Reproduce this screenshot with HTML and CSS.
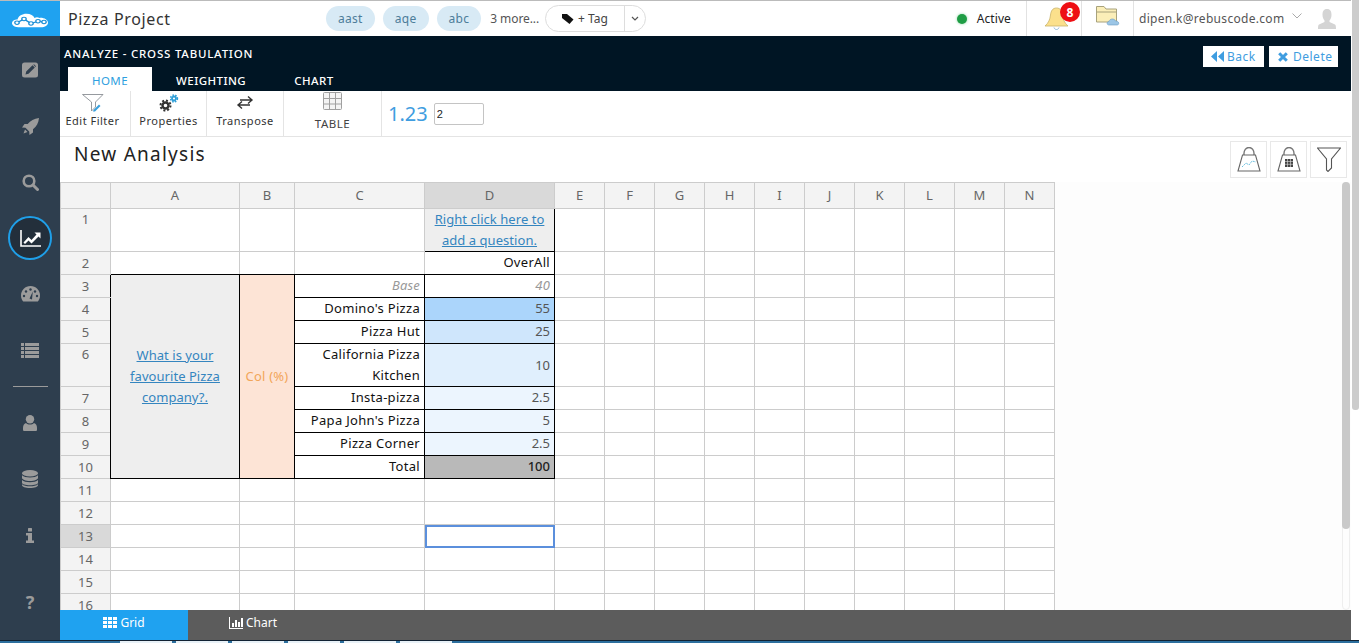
FILE: index.html
```html
<!DOCTYPE html>
<html lang="en">

<head>
    <meta charset="UTF-8">
    <meta name="viewport" content="width=device-width, initial-scale=1.0">
    <title>Pizza Project - Cross Tabulation</title>
    <link rel="stylesheet" href="styles.css">
</head>

<body>
    <div class="app">
        <aside class="sidebar">
            <a class="logo">
                <svg width="38" height="15" viewBox="0 0 38 20" preserveAspectRatio="none">
                    <path d="M9 19C4 19 1 16.500 1 13.500 1 10.500 3.500 8.500 6.500 8.500 7.500 4 11 1 15.500 1 19.500 1 22.500 3.500 23.500 6.500 25 5.500 27 5.500 28.500 6.500 33 6 37 9 37 13 37 16.500 34 19 30 19Z" fill="#fff" />
                    <path d="M6 13L13 8 20 14 27 11 33 12" fill="none" stroke="#1c8fd6" stroke-width="1.600" />
                    <circle cx="6" cy="13" r="2.200" fill="#fff" stroke="#1c8fd6" stroke-width="1.300" />
                    <circle cx="13" cy="8" r="2.200" fill="#fff" stroke="#1c8fd6" stroke-width="1.300" />
                    <circle cx="20" cy="14" r="2.200" fill="#fff" stroke="#1c8fd6" stroke-width="1.300" />
                    <circle cx="27" cy="11" r="2.200" fill="#fff" stroke="#1c8fd6" stroke-width="1.300" />
                    <circle cx="33" cy="12" r="2.200" fill="#fff" stroke="#1c8fd6" stroke-width="1.300" />
                </svg>
            </a>
            <nav class="side-nav">
                <a class="side-item">
                    <svg width="16" height="16" viewBox="0 0 16 16">
                        <rect width="16" height="15" y="0.500" rx="2.500" fill="#9b9b9b" />
                        <path d="M3.500 12.500L4.200 9.500 10.500 3.300 12.800 5.500 6.500 11.800ZM11.300 2.700L12 2.200 14 4.200 13.500 4.900Z" fill="#2e3e4e" />
                    </svg>
                </a>
                <a class="side-item">
                    <svg width="17" height="17" viewBox="0 0 17 17">
                        <path d="M17 0C12 .5 8.500 2.500 5.700 6H2.500L0 9.500 3.500 9.800 7.200 13.500 7.500 17 11 14.500V11.300C14.500 8.500 16.500 5 17 0Z" fill="#9b9b9b" />
                        <path d="M3 11.500L5.500 14 1.500 15.500Z" fill="#9b9b9b" />
                    </svg>
                </a>
                <a class="side-item">
                    <svg width="17" height="17" viewBox="0 0 17 17" fill="none" stroke="#9b9b9b">
                        <circle cx="7" cy="7" r="5.300" stroke-width="2.600" />
                        <path d="M11 11L15.500 15.500" stroke-width="3" stroke-linecap="round" />
                    </svg>
                </a>
                <a class="side-item is-active">
                    <span class="side-ring">
                        <svg width="21" height="17" viewBox="0 0 21 17">
                            <path d="M1 0V16H21" fill="none" stroke="#fff" stroke-width="1.600" />
                            <path d="M3.500 12.500L8.500 7 11.500 10 16.500 4.500 14.500 2.500H20.500V8.500L18.500 6.500 11.500 13.500 8.500 10.500 5 14Z" fill="#fff" />
                        </svg>
                    </span>
                </a>
                <a class="side-item">
                    <svg width="19" height="16" viewBox="0 0 19 16">
                        <path d="M9.500 0C4.200 0 0 4.200 0 9.500 0 11.800.8 13.900 2.200 15.500H16.800C18.200 13.900 19 11.800 19 9.500 19 4.200 14.800 0 9.500 0Z" fill="#9b9b9b" />
                        <g fill="#2e3e4e">
                            <circle cx="9.500" cy="3.500" r="1.200" />
                            <circle cx="5" cy="5.500" r="1.200" />
                            <circle cx="3" cy="10" r="1.200" />
                            <circle cx="16" cy="10" r="1.200" />
                            <circle cx="14" cy="5.500" r="1.200" />
                            <path d="M8.500 12.500L11.800 5.500 11 13.500Z" />
                        </g>
                    </svg>
                </a>
                <a class="side-item">
                    <svg width="18" height="15" viewBox="0 0 18 15" fill="#9b9b9b">
                        <rect width="3" height="3" />
                        <rect x="4" width="14" height="3" />
                        <rect y="4" width="3" height="3" />
                        <rect x="4" y="4" width="14" height="3" />
                        <rect y="8" width="3" height="3" />
                        <rect x="4" y="8" width="14" height="3" />
                        <rect y="12" width="3" height="3" />
                        <rect x="4" y="12" width="14" height="3" />
                    </svg>
                </a>
                <hr class="side-rule">
                <a class="side-item">
                    <svg width="14" height="16" viewBox="0 0 14 16" fill="#9b9b9b">
                        <circle cx="7" cy="4.300" r="4.200" />
                        <path d="M3 8C1 8.500 0 10.500 0 13V14.500C0 15.500.5 16 1.500 16H12.500C13.500 16 14 15.500 14 14.500V13C14 10.500 13 8.500 11 8 10 9 8.500 9.500 7 9.500 5.500 9.500 4 9 3 8Z" />
                    </svg>
                </a>
                <a class="side-item">
                    <svg width="16" height="18" viewBox="0 0 16 18" fill="#9b9b9b">
                        <ellipse cx="8" cy="3.200" rx="8" ry="3.200" />
                        <path d="M0 5.300C1.500 6.900 4.500 7.500 8 7.500S14.500 6.900 16 5.300V8C16 9.500 12.500 11 8 11S0 9.500 0 8Z" />
                        <path d="M0 10C1.500 11.500 4.500 12.200 8 12.200S14.500 11.500 16 10V12.700C16 14.200 12.500 15.200 8 15.200S0 14.200 0 12.700Z" />
                        <path d="M0 14.300C1.500 15.700 4.500 16.300 8 16.300S14.500 15.700 16 14.300V15C16 16.800 12.500 18 8 18S0 16.800 0 15Z" />
                    </svg>
                </a>
                <a class="side-item">
                    <svg width="8" height="15" viewBox="0 0 8 15" fill="#9b9b9b">
                        <rect x="2" width="4" height="3.500" rx=".5" />
                        <path d="M0 5H6V12.500H8V15H0V12.500H2V7.500H0Z" />
                    </svg>
                </a>
                <a class="side-item side-help">?</a>
            </nav>
        </aside>

        <div class="main">
            <header class="topbar">
                <span class="project-name">Pizza Project</span>
                <div class="tags">
                    <span class="tag">aast</span>
                    <span class="tag">aqe</span>
                    <span class="tag">abc</span>
                    <span class="more">3 more...</span>
                    <div class="tag-btn">
                        <span class="tag-add">
                            <svg width="12" height="10" viewBox="0 0 12 10">
                                <path d="M0 0H5L11.500 5.500 7.500 10 0 4Z" fill="#111" />
                            </svg>
                            + Tag
                        </span>
                        <span class="tag-caret">
                            <svg width="8" height="5" viewBox="0 0 8 5">
                                <path d="M1 1L4 4 7 1" fill="none" stroke="#555" stroke-width="1.200" />
                            </svg>
                        </span>
                    </div>
                </div>
                <div class="top-right">
                    <div class="status"><span class="dot"></span>Active</div>
                    <div class="bell">
                        <svg width="25" height="23" viewBox="0 0 25 23">
                            <path d="M12.500 1C8.500 1 7 4 6.500 8 6 12.500 4.500 16 1 19H24C20.500 16 19 12.500 18.500 8 18 4 16.500 1 12.500 1Z" fill="#fbe08c" stroke="#c9b36a" stroke-width=".8" />
                            <path d="M10 20.500C10.500 22 11.500 22.500 12.500 22.500S14.500 22 15 20.500" fill="none" stroke="#8fb6d8" stroke-width="1" />
                        </svg>
                        <span class="badge">8</span>
                    </div>
                    <div class="folder">
                        <svg width="24" height="21" viewBox="0 0 24 21">
                            <path d="M.5 1.500H8L10 4H20.500V17H.5Z" fill="#fbeeb8" stroke="#a8a27c" />
                            <path d="M.5 7H20.500" stroke="#a8a27c" />
                            <path d="M13 20C10.500 20 10.500 16.500 13 16.500 13.500 13.500 18.500 13 19.500 16 23 15.500 24 20 21 20Z" fill="#9cc6e6" stroke="#6c9cc2" stroke-width=".6" />
                        </svg>
                    </div>
                    <div class="account">
                        <span>dipen.k@rebuscode.com</span>
                        <svg class="account-caret" width="10" height="6" viewBox="0 0 10 6">
                            <path d="M.5 .5L5 5 9.500 .5" fill="none" stroke="#aaa" />
                        </svg>
                        <svg class="avatar" width="18" height="20" viewBox="0 0 18 20">
                            <path d="M9 0C5.500 0 4.500 2.500 4.500 6 4.500 8.500 5.500 10.500 6.500 11.500V13L1 15.500C.3 16 0 17 0 20H18C18 17 17.700 16 17 15.500L11.500 13V11.500C12.500 10.500 13.500 8.500 13.500 6 13.500 2.500 12.500 0 9 0Z" fill="#d4d4d4" />
                        </svg>
                    </div>
                </div>
            </header>

            <section class="analyze-bar">
                <div class="analyze-left">
                    <h2 class="analyze-title">ANALYZE - CROSS TABULATION</h2>
                    <div class="tabs">
                        <a class="tab active">HOME</a>
                        <a class="tab">WEIGHTING</a>
                        <a class="tab">CHART</a>
                    </div>
                </div>
                <div class="analyze-actions">
                    <button class="action-btn w-back">
                        <svg width="13" height="11" viewBox="0 0 13 11" fill="#3f9de0">
                            <path d="M6 0V11L0 5.500ZM13 0V11L7 5.500Z" />
                        </svg>
                        Back
                    </button>
                    <button class="action-btn w-delete">
                        <svg width="10" height="10" viewBox="0 0 10 10" fill="none" stroke="#3f9de0" stroke-width="3">
                            <path d="M1.200 1.200L8.800 8.800M8.800 1.200L1.200 8.800" />
                        </svg>
                        Delete
                    </button>
                </div>
            </section>

            <section class="ribbon">
                <div class="ribbon-item w-filter">
                    <svg width="22" height="18" viewBox="0 0 22 18" fill="none">
                        <path d="M.5 .5H21L13.500 8V13L9.500 17V8Z" stroke="#8a8f94" stroke-width=".9" />
                        <path d="M11.500 16L17 10.500 18.500 12 13 17.500 11 17.500Z" fill="#3aa0dc" />
                    </svg>
                    <span>Edit Filter</span>
                </div>
                <div class="ribbon-item w-props">
                    <svg width="20" height="18" viewBox="0 0 20 18" fill="none">
                        <circle cx="6.500" cy="11.500" r="3" stroke="#333" stroke-width="2.400" />
                        <circle cx="6.500" cy="11.500" r="5" stroke="#333" stroke-width="2" stroke-dasharray="2 1.900" />
                        <circle cx="15" cy="4.500" r="2" stroke="#2f9fd8" stroke-width="1.800" />
                        <circle cx="15" cy="4.500" r="3.400" stroke="#2f9fd8" stroke-width="1.600" stroke-dasharray="1.500 1.300" />
                    </svg>
                    <span>Properties</span>
                </div>
                <div class="ribbon-item w-trans">
                    <svg width="18" height="18" viewBox="0 0 18 18" fill="none" stroke="#333" stroke-width="1.400">
                        <path d="M4 6H15.500M12 2.500L16 6 12 9.500" />
                        <path d="M14 11H2.500M6 7.500L2 11 6 14.500" />
                    </svg>
                    <span>Transpose</span>
                </div>
                <div class="ribbon-item w-table">
                    <svg width="19" height="18" viewBox="0 0 19 18" fill="#f4f4f4" stroke="#a0a0a0">
                        <rect x=".5" y=".5" width="18" height="17" rx="1" />
                        <path d="M6.500 .5V17.500M12.500 .5V17.500M.5 6.500H18.500M.5 12H18.500" fill="none" />
                    </svg>
                    <span class="table-label">TABLE</span>
                </div>
                <div class="decimals">
                    <span class="decimals-label">1.23</span>
                    <input class="decimals-input" type="text" value="2">
                </div>
            </section>

            <div class="title-row">
                <h1 class="page-title">New Analysis</h1>
                <div class="title-tools">
                    <span class="tool-box">
                        <svg width="24" height="25" viewBox="0 0 24 25" fill="none">
                            <path d="M7 8C6 -2 18 -2 17 8" stroke="#777" stroke-width="1.400" />
                            <path d="M5.500 8H18.500L23 24H1Z" stroke="#666" stroke-width="1.100" />
                            <path d="M5 20L9 16 12 18 15 14 19 15" stroke="#6cc0df" stroke-width="1" stroke-dasharray="2 1" />
                        </svg>
                    </span>
                    <span class="tool-box">
                        <svg width="24" height="25" viewBox="0 0 24 25" fill="none">
                            <path d="M7 8C6 -2 18 -2 17 8" stroke="#777" stroke-width="1.400" />
                            <path d="M5.500 8H18.500L23 24H1Z" stroke="#666" stroke-width="1.100" />
                            <rect x="8" y="12" width="8" height="8" fill="#444" />
                            <path d="M10.500 12V20M13.500 12V20M8 14.500H16M8 17.300H16" stroke="#ddd" stroke-width=".6" />
                        </svg>
                    </span>
                    <span class="tool-box">
                        <svg width="24" height="25" viewBox="0 0 24 25" fill="none">
                            <path d="M.5 1H23.500L14.500 12V21L11 24.500 9.500 23V12Z" stroke="#555" stroke-width="1.100" />
                        </svg>
                    </span>
                </div>
            </div>

            <div class="grid-area">
                <div class="grid-scroll">
                    <table class="sheet">
                        <colgroup>
                            <col class="c-head">
                            <col class="c-a">
                            <col class="c-b">
                            <col class="c-c">
                            <col class="c-d">
                            <col span="10" class="c-x">
                        </colgroup>
                        <tr class="r-head">
                            <th></th><th>A</th><th>B</th><th>C</th><th class="sel">D</th><th>E</th><th>F</th><th>G</th><th>H</th><th>I</th><th>J</th><th>K</th><th>L</th><th>M</th><th>N</th>
                        </tr>
                        <tr class="r-tall">
                            <th class="top">1</th><td></td><td></td><td></td>
                            <td class="q-cell blk"><a class="link">Right click here to add a question.</a></td>
                            <td></td><td></td><td></td><td></td><td></td><td></td><td></td><td></td><td></td><td></td>
                        </tr>
                        <tr>
                            <th>2</th><td class="blk-b"></td><td class="blk-b"></td><td class="blk-b"></td>
                            <td class="label blk">OverAll</td>
                            <td></td><td></td><td></td><td></td><td></td><td></td><td></td><td></td><td></td><td></td>
                        </tr>
                        <tr>
                            <th class="blk-r">3</th>
                            <td rowspan="8" class="q-side blk"><a class="link">What is your favourite Pizza company?.</a></td>
                            <td rowspan="8" class="col-pct blk">Col (%)</td>
                            <td class="base blk">Base</td><td class="base blk">40</td>
                            <td></td><td></td><td></td><td></td><td></td><td></td><td></td><td></td><td></td><td></td>
                        </tr>
                        <tr>
                            <th class="blk-r">4</th><td class="label blk">Domino's Pizza</td><td class="val blk heat1">55</td>
                            <td></td><td></td><td></td><td></td><td></td><td></td><td></td><td></td><td></td><td></td>
                        </tr>
                        <tr>
                            <th class="blk-r">5</th><td class="label blk">Pizza Hut</td><td class="val blk heat2">25</td>
                            <td></td><td></td><td></td><td></td><td></td><td></td><td></td><td></td><td></td><td></td>
                        </tr>
                        <tr class="r-tall">
                            <th class="top blk-r">6</th><td class="label blk">California Pizza Kitchen</td><td class="val blk heat3">10</td>
                            <td></td><td></td><td></td><td></td><td></td><td></td><td></td><td></td><td></td><td></td>
                        </tr>
                        <tr>
                            <th class="blk-r">7</th><td class="label blk">Insta-pizza</td><td class="val blk heat4">2.5</td>
                            <td></td><td></td><td></td><td></td><td></td><td></td><td></td><td></td><td></td><td></td>
                        </tr>
                        <tr>
                            <th class="blk-r">8</th><td class="label blk">Papa John's Pizza</td><td class="val blk heat4">5</td>
                            <td></td><td></td><td></td><td></td><td></td><td></td><td></td><td></td><td></td><td></td>
                        </tr>
                        <tr>
                            <th class="blk-r">9</th><td class="label blk">Pizza Corner</td><td class="val blk heat4">2.5</td>
                            <td></td><td></td><td></td><td></td><td></td><td></td><td></td><td></td><td></td><td></td>
                        </tr>
                        <tr>
                            <th class="blk-r">10</th><td class="label blk">Total</td><td class="val blk total">100</td>
                            <td></td><td></td><td></td><td></td><td></td><td></td><td></td><td></td><td></td><td></td>
                        </tr>
                        <tr>
                            <th>11</th><td></td><td></td><td></td><td></td><td></td><td></td><td></td><td></td><td></td><td></td><td></td><td></td><td></td><td></td>
                        </tr>
                        <tr>
                            <th>12</th><td></td><td></td><td></td><td></td><td></td><td></td><td></td><td></td><td></td><td></td><td></td><td></td><td></td><td></td>
                        </tr>
                        <tr>
                            <th class="sel">13</th><td></td><td></td><td></td><td class="current"></td><td></td><td></td><td></td><td></td><td></td><td></td><td></td><td></td><td></td><td></td>
                        </tr>
                        <tr>
                            <th>14</th><td></td><td></td><td></td><td></td><td></td><td></td><td></td><td></td><td></td><td></td><td></td><td></td><td></td><td></td>
                        </tr>
                        <tr>
                            <th>15</th><td></td><td></td><td></td><td></td><td></td><td></td><td></td><td></td><td></td><td></td><td></td><td></td><td></td><td></td>
                        </tr>
                        <tr>
                            <th>16</th><td></td><td></td><td></td><td></td><td></td><td></td><td></td><td></td><td></td><td></td><td></td><td></td><td></td><td></td>
                        </tr>
                    </table>
                </div>
                <div class="inner-scroll"><div class="inner-thumb"></div></div>
            </div>

            <footer class="sheet-tabs">
                <a class="sheet-tab active">
                    <svg width="14" height="11" viewBox="0 0 14 11" fill="#fff">
                        <path d="M0 0H4V3H0ZM5 0H9V3H5ZM10 0H14V3H10ZM0 4H4V7H0ZM5 4H9V7H5ZM10 4H14V7H10ZM0 8H4V11H0ZM5 8H9V11H5ZM10 8H14V11H10Z" />
                    </svg>
                    Grid
                </a>
                <a class="sheet-tab">
                    <svg width="14" height="12" viewBox="0 0 14 12" fill="#fff">
                        <path d="M0 0H1V11H14V12H0ZM3 6H5V10H3ZM6 3H8V10H6ZM9 5H11V10H9ZM12 1H14V10H12Z" />
                    </svg>
                    Chart
                </a>
            </footer>
        </div>

        <div class="page-scroll"><div class="page-thumb"></div></div>
    </div>

    <div class="taskbar">
        <span class="task"></span><span class="task"></span><span class="task"></span><span class="task"></span><span class="task"></span><span class="task"></span>
    </div>
</body>

</html>
```

FILE: styles.css
```css
* {
    box-sizing: border-box;
}

html,
body {
    height: 100%;
}

body {
    margin: 0;
    overflow: hidden;
    display: flex;
    flex-direction: column;
    font-family: "Noto Sans", Arial, sans-serif;
    font-size: 13px;
    color: #333;
    background-color: #fff;
}

.app {
    flex: 1;
    min-height: 0;
    display: flex;
}

/* left navigation */
.sidebar {
    width: 60px;
    flex: none;
    display: flex;
    flex-direction: column;
    background-color: #2e3e4e;
}

.logo {
    height: 36px;
    flex: none;
    display: flex;
    align-items: center;
    justify-content: center;
    padding-top: 3px;
    background-color: #1fa2f0;
    border-top: 1px solid #bbb;
}

.side-nav {
    flex: 1;
    display: flex;
    flex-direction: column;
    padding-top: 6px;
}

.side-item {
    height: 56px;
    flex: none;
    display: flex;
    align-items: center;
    justify-content: center;
}

.side-ring {
    width: 44px;
    height: 44px;
    display: flex;
    align-items: center;
    justify-content: center;
    border: 2px solid #1f9fe8;
    border-radius: 50%;
    background-color: #232f3b;
}

.side-rule {
    width: 35px;
    margin: 8px auto;
    border: 0;
    border-top: 1px solid #9b9b9b;
}

.side-help {
    margin-top: auto;
    margin-bottom: 10px;
    font-size: 18px;
    font-weight: 700;
    color: #9b9b9b;
}

.main {
    flex: 1;
    min-width: 0;
    display: flex;
    flex-direction: column;
}

/* top bar */
.topbar {
    height: 36px;
    flex: none;
    display: flex;
    align-items: center;
    border-top: 1px solid #bbb;
    padding-left: 8px;
}

.project-name {
    width: 258px;
    font-size: 16px;
    letter-spacing: .65px;
    color: #333;
}

.tags {
    display: flex;
    align-items: center;
    gap: 8px;
}

.tag {
    height: 25px;
    padding: 0 12px;
    display: flex;
    align-items: center;
    border-radius: 13px;
    background-color: #d8eaf5;
    font-size: 12px;
    letter-spacing: .3px;
    color: #4d7d9a;
}

.more {
    margin-left: 1px;
    font-size: 12px;
    letter-spacing: -.1px;
    color: #555;
}

.tag-btn {
    height: 27px;
    display: flex;
    margin-left: -2px;
    border: 1px solid #ddd;
    border-radius: 14px;
}

.tag-add {
    width: 79px;
    display: flex;
    align-items: center;
    justify-content: center;
    gap: 4px;
    border-right: 1px solid #ddd;
    font-size: 12px;
    color: #444;
}

.tag-caret {
    width: 20px;
    display: flex;
    align-items: center;
    justify-content: center;
}

.top-right {
    height: 100%;
    margin-left: auto;
    display: flex;
    align-items: center;
}

.status {
    width: 72px;
    display: flex;
    align-items: center;
    justify-content: flex-end;
    gap: 10px;
    height: 100%;
    padding-right: 15px;
    border-right: 1px solid #e2e2e2;
    font-size: 12px;
    letter-spacing: .1px;
    color: #222;
}

.dot {
    width: 10px;
    height: 10px;
    border-radius: 50%;
    background-color: #1f9d45;
    box-shadow: 0 0 3px #8fd6a5;
}

.bell {
    position: relative;
    width: 55px;
    height: 100%;
    display: flex;
    align-items: center;
    padding-left: 17px;
    border-right: 1px solid #e2e2e2;
}

.badge {
    position: absolute;
    top: 1px;
    left: 33px;
    width: 20px;
    height: 20px;
    display: flex;
    align-items: center;
    justify-content: center;
    border-radius: 50%;
    background-color: #ee0f14;
    font-size: 12px;
    font-weight: 700;
    color: #fff;
}

.folder {
    width: 52px;
    height: 100%;
    display: flex;
    align-items: center;
    padding: 0 0 6px 14px;
    border-right: 1px solid #e2e2e2;
}

.account {
    width: 217px;
    height: 100%;
    display: flex;
    align-items: center;
    padding-left: 5px;
    font-size: 12px;
    letter-spacing: .3px;
    color: #555;
}

.account-caret {
    margin: 0 0 6px 8px;
}

.avatar {
    margin-left: 16px;
}

/* dark analyze bar */
.analyze-bar {
    height: 55px;
    flex: none;
    display: flex;
    justify-content: space-between;
    padding-left: 4px;
    background-color: #001524;
}

.analyze-left {
    display: flex;
    flex-direction: column;
    justify-content: flex-end;
}

.analyze-title {
    margin: 0 0 6px;
    font-size: 11.500px;
    font-weight: 500;
    letter-spacing: .78px;
    color: #fff;
}

.tabs {
    display: flex;
    margin-left: 4px;
    height: 24px;
}

.tab {
    width: 84px;
    display: flex;
    align-items: center;
    justify-content: center;
    padding-top: 3px;
    font-size: 11.500px;
    font-weight: 500;
    letter-spacing: .45px;
    color: #fff;
}

.tab + .tab {
    width: auto;
    padding-left: 24px;
    padding-right: 24px;
}

.tab.active {
    background-color: #fff;
    font-weight: 400;
    color: #2f9fe0;
}

.analyze-actions {
    display: flex;
    gap: 5px;
    padding: 10px 13px 0 0;
}

.action-btn {
    height: 21px;
    display: flex;
    align-items: center;
    padding: 0;
    border: 0;
    background-color: #fff;
    font-family: inherit;
    font-size: 12px;
    letter-spacing: .5px;
    color: #3f9de0;
}

.w-back {
    width: 61px;
    gap: 3px;
    padding-left: 8px;
}

.w-delete {
    width: 69px;
    gap: 5px;
    padding-left: 9px;
}

/* ribbon */
.ribbon {
    height: 46px;
    flex: none;
    display: flex;
    align-items: stretch;
    border-bottom: 1px solid #e4e4e4;
}

.ribbon-item {
    display: flex;
    flex-direction: column;
    align-items: center;
    justify-content: flex-start;
    padding-top: 3px;
    border-right: 1px solid #e4e4e4;
    font-size: 11px;
    letter-spacing: .5px;
    color: #333;
}

.ribbon-item span {
    line-height: 15px;
    margin-top: 1px;
}

.w-filter {
    width: 71px;
    padding-right: 5px;
}

.w-props {
    width: 76px;
}

.w-trans {
    width: 77px;
}

.w-table {
    width: 98px;
    padding-top: 1px;
}

.ribbon-item .table-label {
    margin-top: 6px;
    font-size: 11.500px;
    letter-spacing: .5px;
    color: #444;
}

.decimals {
    display: flex;
    align-items: center;
    gap: 6px;
    padding-left: 6px;
}

.decimals-label {
    font-size: 20px;
    color: #3f9de0;
}

.decimals-input {
    width: 50px;
    height: 22px;
    padding: 0 2px;
    border: 1px solid #c4c4c4;
    border-radius: 2px;
    font-family: "Liberation Sans", Arial, sans-serif;
    font-size: 11px;
    color: #222;
}

/* title row */
.title-row {
    height: 45px;
    flex: none;
    display: flex;
    justify-content: space-between;
    align-items: flex-start;
    padding: 4px 4px 0 14px;
}

.page-title {
    margin: 0;
    font-size: 19px;
    font-weight: 400;
    line-height: 27px;
    letter-spacing: 1.250px;
    color: #222;
}

.title-tools {
    display: flex;
    gap: 3px;
}

.tool-box {
    width: 37px;
    height: 37px;
    display: flex;
    align-items: center;
    justify-content: center;
    border: 1px solid #e8e8e8;
}

/* spreadsheet */
.grid-area {
    flex: 1;
    min-height: 0;
    display: flex;
    background-color: #fdfdfd;
}

.grid-scroll {
    flex: 1;
    min-width: 0;
    overflow: hidden;
}

.inner-scroll {
    width: 8px;
    margin-right: 1px;
    border: 1px solid #eee;
    border-radius: 4px;
}

.inner-thumb {
    height: 347px;
    margin: -1px;
    border-radius: 4px;
    background-color: #c9c9c9;
}

.sheet {
    width: 995px;
    table-layout: fixed;
    border-collapse: collapse;
    background-color: #fff;
    font-size: 13px;
    line-height: 21px;
}

.c-head {
    width: 50px;
}

.c-a {
    width: 129px;
}

.c-b {
    width: 55px;
}

.c-c,
.c-d {
    width: 130px;
}

.c-x {
    width: 50px;
}

.sheet tr {
    height: 23px;
}

.sheet .r-head {
    height: 26px;
}

.sheet .r-tall {
    height: 43px;
}

.sheet th,
.sheet td {
    padding: 0 3px;
    border: 1px solid #ccc;
    overflow: hidden;
}

.sheet th {
    background-color: #f3f3f3;
    font-weight: 400;
    color: #666;
}

.sheet th.top {
    vertical-align: top;
}

.sheet th.sel {
    background-color: #d9d9d9;
}

.sheet th.blk-r {
    border-right-color: #000;
}

.sheet td.blk-b {
    border-bottom-color: #000;
}

.sheet td.blk {
    border-color: #000;
}

.link {
    color: #3485bf;
    letter-spacing: .05px;
    text-decoration: underline;
}

.q-cell,
.q-side,
.col-pct {
    text-align: center;
}

.sheet td.q-cell {
    border-top-color: #ccc;
    border-left-color: #ccc;
    background-color: #eee;
}

.sheet td.q-side {
    background-color: #eee;
}

.sheet td.col-pct {
    background-color: #fde4d6;
    letter-spacing: .2px;
    color: #f2a65a;
}

.sheet td.label,
.sheet td.base,
.sheet td.val {
    padding-right: 4px;
    padding-bottom: 1px;
    text-align: right;
}

.sheet .r-tall td.label,
.sheet .r-tall td.val {
    padding-bottom: 0;
}

.label {
    letter-spacing: .3px;
    color: #111;
}

.base {
    font-style: italic;
    letter-spacing: .2px;
    color: #999;
}

.val {
    color: #555;
}

.sheet td.heat1 {
    background-color: #abd5fb;
}

.sheet td.heat2 {
    background-color: #cfe6fc;
}

.sheet td.heat3 {
    background-color: #e0effd;
}

.sheet td.heat4 {
    background-color: #ecf5fe;
}

.sheet td.total {
    background-color: #b9b9b9;
    font-weight: 500;
    color: #222;
}

.sheet td.current {
    outline: 2px solid #5b8fdc;
    outline-offset: -2px;
}

/* bottom tabs */
.sheet-tabs {
    height: 30px;
    flex: none;
    display: flex;
    background-color: #5c5c5c;
}

.sheet-tab {
    width: 128px;
    display: flex;
    align-items: center;
    justify-content: center;
    gap: 3px;
    margin-right: 1px;
    padding-bottom: 5px;
    font-size: 12px;
    color: #fff;
}

.sheet-tab.active {
    background-color: #1fa2f0;
}

/* browser page scrollbar */
.page-scroll {
    width: 8px;
    flex: none;
    background-color: #fff;
}

.page-thumb {
    height: 410px;
    margin-left: 1px;
    border-radius: 0 0 3px 3px;
    background-color: #ccc;
}

/* strip of the OS taskbar under the window */
.taskbar {
    height: 3px;
    flex: none;
    display: flex;
    gap: 4px;
    padding-left: 120px;
    background-color: #2c6f9e;
    border-top: 1px solid #123;
}

.task {
    width: 52px;
    background-color: #e8f1f7;
}
```
